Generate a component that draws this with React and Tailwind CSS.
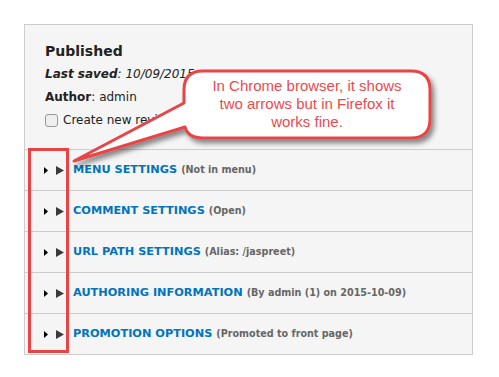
import React from 'react';

const rows = [
    { title: 'MENU SETTINGS', note: '(Not in menu)' },
    { title: 'COMMENT SETTINGS', note: '(Open)' },
    { title: 'URL PATH SETTINGS', note: '(Alias: /jaspreet)' },
    { title: 'AUTHORING INFORMATION', note: '(By admin (1) on 2015-10-09)' },
    { title: 'PROMOTION OPTIONS', note: '(Promoted to front page)' },
];

const Arrows = () => (
    <div className="flex items-center w-[30px] pl-[19px]">
        <svg width="4" height="7" viewBox="0 0 4 7" className="shrink-0">
            <path d="M0 0 L4 3.5 L0 7 Z" fill="#000" />
        </svg>
        <svg width="8" height="9" viewBox="0 0 8 9" className="shrink-0 ml-[8px]">
            <path d="M0 0 L8 4.5 L0 9 Z" fill="#3a3a3a" />
        </svg>
    </div>
);

const Callout = () => (
    <div className="absolute left-0 top-0 w-[499px] h-[377px] pointer-events-none">
        <svg width="499" height="377" className="absolute left-0 top-0">
            <defs>
                <filter id="shadow" x="-20%" y="-20%" width="140%" height="160%">
                    <feDropShadow dx="3" dy="4" stdDeviation="2.5" floodColor="#000" floodOpacity="0.45" />
                </filter>
            </defs>
            <path
                d="M203 71 L411 71 Q430 71 430 90 L430 119 Q430 138 411 138 L203 138 Q188 138 185 127 L74 161 L184 103 L184 90 Q184 71 203 71 Z"
                fill="#fff"
                stroke="#e84447"
                strokeWidth="3"
                strokeLinejoin="round"
                filter="url(#shadow)"
            />
        </svg>
        <div
            className="absolute left-[186px] top-[77px] w-[242px] text-center text-[15px] leading-[18px] text-[#ec4a4d]"
            style={{ fontFamily: '"Liberation Sans", Arial, sans-serif' }}
        >
            <div>In Chrome browser, it shows</div>
            <div>two arrows but in Firefox it</div>
            <div>works fine.</div>
        </div>
        <div className="absolute left-[28px] top-[148px] w-[41px] h-[205px] border-[3.5px] border-[#e84444]" />
    </div>
);

const App = () => {
    return (
        <div
            className="relative w-[499px] h-[377px] bg-white overflow-hidden"
            style={{ fontFamily: '"DejaVu Sans", Verdana, sans-serif' }}
        >
            <div className="absolute left-0 top-0 w-full h-full pt-[24px] pl-[24px]">
                <div className="w-[449px] h-[331px] border border-[#cccccc] bg-[#f5f5f5]">
                    <div className="h-[124px] pl-[20px] pt-[15px] text-[#222]">
                        <div className="text-[14px] font-bold leading-[22px] text-[#222]">Published</div>
                        <div className="mt-[3px] text-[12px] leading-[18px] italic">
                            <span className="font-bold">Last saved</span>: 10/09/2015
                        </div>
                        <div className="mt-[5px] text-[12px] leading-[18px]">
                            <span className="font-bold">Author</span>: admin
                        </div>
                        <div className="mt-[5px] flex items-center text-[12px] leading-[18px]">
                            <span className="w-[13px] h-[13px] rounded-[3px] border border-[#999] bg-[#eee] shrink-0" />
                            <span className="ml-[5px]">Create new revision</span>
                        </div>
                    </div>
                    {rows.map((r) => (
                        <div key={r.title} className="h-[41px] border-t border-[#cccccc] flex items-center">
                            <Arrows />
                            <span className="ml-[18px] text-[11.3px] font-bold text-[#0074bd] whitespace-nowrap">{r.title}</span>
                            <span className="ml-[4px] text-[9.6px] font-bold text-[#666] whitespace-nowrap">{r.note}</span>
                        </div>
                    ))}
                </div>
            </div>
            <Callout />
        </div>
    );
};

export default App;
